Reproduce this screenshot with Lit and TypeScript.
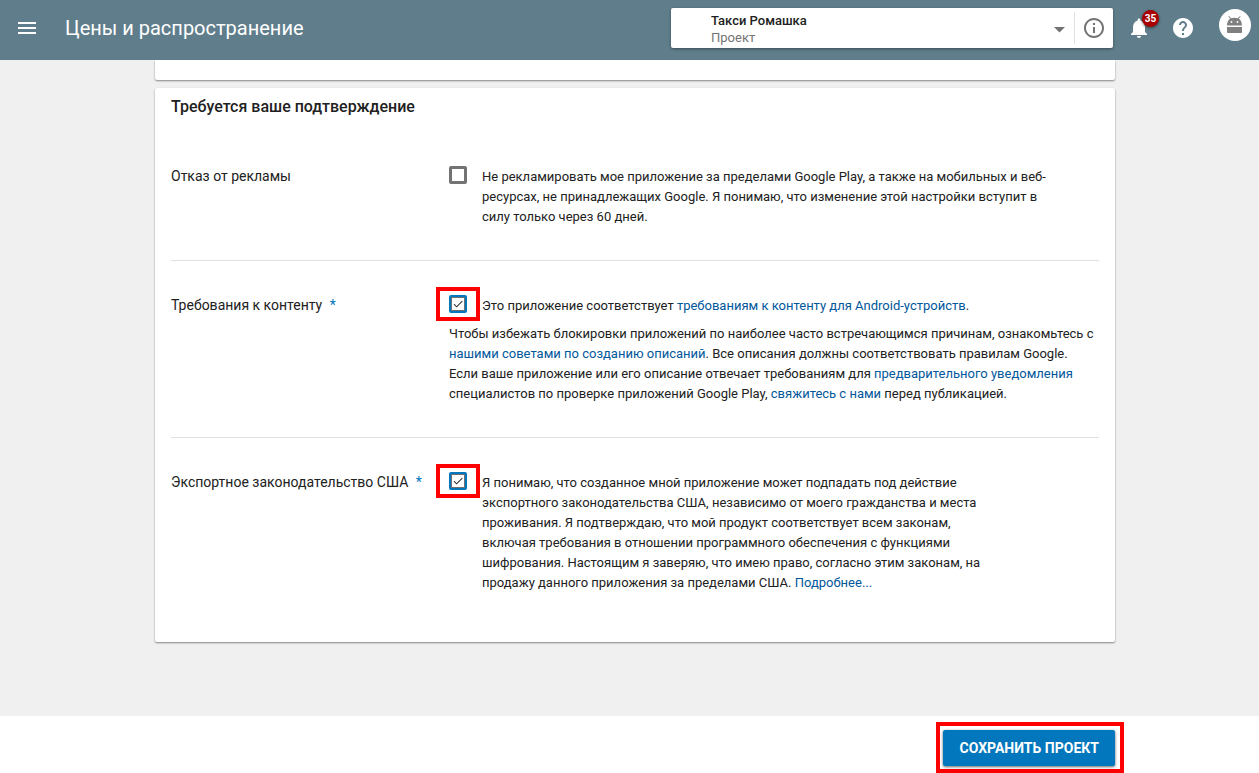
import { LitElement, html, css } from "lit";
import { customElement, property } from "lit/decorators.js";

@customElement("check-box")
class CheckBox extends LitElement {
  @property({ type: Boolean }) checked = false;
  @property({ type: Boolean }) marked = false;
  @property() label = "";

  static styles = css`
    :host { display: block; }
    .box { position: relative; display: grid; width: 18px; height: 18px; }
    .box > input, .box > svg { grid-area: 1 / 1; }
    input {
      appearance: none; box-sizing: border-box; width: 18px; height: 18px; margin: 0;
      border: 3px solid #737373; border-radius: 2px; background: #fff; cursor: pointer;
    }
    input:checked { border-width: 2px; border-color: #0277bd; box-shadow: inset 1px 1px #6f6f6f, inset -1px -1px #6f6f6f; }
    svg { pointer-events: none; visibility: hidden; z-index: 1; }
    input:checked + svg { visibility: visible; }
    .marked::after {
      content: ""; position: absolute; inset: -8px -13px;
      border: 4px solid #f00; pointer-events: none;
    }
  `;

  render() {
    return html`<span class="box ${this.marked ? "marked" : ""}">
      <input type="checkbox" aria-label=${this.label} .checked=${this.checked} />
      <svg width="18" height="18" viewBox="0 0 18 18" aria-hidden="true">
        <path d="M5 9.200 7.600 11.800 13.300 6.100" fill="none" stroke="#333" stroke-width="1.100" />
      </svg>
    </span>`;
  }
}

@customElement("app-root")
class AppRoot extends LitElement {
  static styles = css`
    :host {
      display: flex; flex-direction: column; height: 100vh; overflow: hidden;
      background: #f0f0f0; color: #212121;
      font: 13px/20px Roboto, "Noto Sans", sans-serif;
    }
    * { box-sizing: border-box; }
    button, select { font: inherit; color: inherit; border: 0; background: none; padding: 0; margin: 0; cursor: pointer; }
    svg { display: block; }
    a { color: #01579b; text-decoration: none; }

    .bar {
      flex: none; display: flex; align-items: center; height: 60px;
      padding: 0 8px 4px 15px; background: #607d8b; color: #fff;
    }
    .title { margin: 0 auto 0 26px; font-size: 20px; line-height: 28px; font-weight: 400; }
    .picker {
      display: flex; align-items: center; width: 442px; height: 40px; margin-right: 14px;
      background: #fff; color: #737373; border-radius: 2px; box-shadow: 0 1px 3px rgba(0, 0, 0, 0.4);
    }
    .project { flex: 1; display: grid; height: 40px; align-items: center; }
    .project > * { grid-area: 1 / 1; }
    .project select {
      appearance: none; width: 100%; height: 40px; padding: 4px 40px 18px;
      line-height: 18px; font-weight: 500; color: #212121;
    }
    .kind { align-self: end; padding: 0 0 0 40px; pointer-events: none; }
    .caret { justify-self: end; margin: 3px 9px 0 0; pointer-events: none; }
    .info { padding: 4px 7px; border-left: 1px solid #e0e0e0; }
    .bell { position: relative; margin-right: 20px; }
    .badge {
      position: absolute; left: 15px; top: -6px; width: 17px; height: 17px; border-radius: 50%;
      background: #a80000; color: #fff; font-size: 10px; line-height: 17px; font-weight: 700;
      text-align: center; box-shadow: 0 1px 3px rgba(0, 0, 0, 0.5);
    }
    .help { margin-right: 24px; }
    .avatar { margin-bottom: 6px; }

    main { flex: 1; min-height: 0; overflow: hidden; padding-left: 11px; }
    .card {
      max-width: 960px; margin: 0 auto 8px; padding: 9px 16px 16px; background: #fff;
      border-radius: 2px; box-shadow: 0 1px 2px rgba(0, 0, 0, 0.45);
    }
    .tail { height: 20px; padding: 0; border-radius: 0 0 2px 2px; }
    h2 { margin: 0 0 15px; font-size: 16px; line-height: 20px; font-weight: 500; }
    .row { display: grid; grid-template-columns: 278px 1fr; padding: 35px 0 33px; }
    .row + .row { border-top: 1px solid #e0e0e0; }
    .name { margin: 0; font-size: 14px; line-height: 18px; font-weight: 400; }
    .star { color: #0277bd; margin-left: 4px; }
    .option { display: flex; align-items: flex-start; gap: 15px; }
    .option check-box { margin-top: -1px; }
    p { margin: 0; }
    .wide { max-width: 576px; }
    .narrow { max-width: 504px; }
    .note { margin-top: 8px; }

    footer { flex: none; height: 57px; padding: 14px 0 7px 11px; background: #fff; }
    .actions { display: flex; justify-content: flex-end; max-width: 960px; margin: 0 auto; }
    .save {
      position: relative; height: 36px; padding: 0 16px; border-radius: 2px; background: #0277bd;
      color: #fff; font-size: 14px; font-weight: 700; box-shadow: 0 1px 3px rgba(0, 0, 0, 0.6);
    }
    .save::after {
      content: ""; position: absolute; inset: -8px -9px -7px -7px; border: 4px solid #f00; pointer-events: none;
    }
  `;

  render() {
    return html`
      <header class="bar">
        <button aria-label="Меню">
          <svg width="24" height="24" viewBox="0 0 24 24" fill="currentColor"><path d="M3 18h18v-2H3v2zm0-5h18v-2H3v2zm0-7v2h18V6H3z" /></svg>
        </button>
        <h1 class="title">Цены и распространение</h1>
        <div class="picker">
          <div class="project">
            <select id="project" aria-label="Проект"><option>Такси Ромашка</option></select>
            <label class="kind" for="project">Проект</label>
            <svg class="caret" width="11" height="6" viewBox="0 0 11 6" fill="#737373"><path d="M0 0h11L5.500 5.500z" /></svg>
          </div>
          <button class="info" aria-label="Сведения">
            <svg width="24" height="24" viewBox="0 0 24 24" fill="currentColor"><path d="M11 17h2v-6h-2v6zm1-15C6.480 2 2 6.480 2 12s4.480 10 10 10 10-4.480 10-10S17.520 2 12 2zm0 18c-4.410 0-8-3.590-8-8s3.590-8 8-8 8 3.590 8 8-3.590 8-8 8zM11 9h2V7h-2v2z" /></svg>
          </button>
        </div>
        <button class="bell" aria-label="Уведомления">
          <svg width="24" height="24" viewBox="0 0 24 24" fill="currentColor"><path d="M12 22c1.100 0 2-.9 2-2h-4c0 1.100.89 2 2 2zm6-6v-5c0-3.070-1.640-5.640-4.500-6.320V4c0-.83-.67-1.500-1.500-1.500s-1.500.67-1.500 1.500v.68C7.630 5.360 6 7.920 6 11v5l-2 2v1h16v-1l-2-2z" /></svg>
          <span class="badge">35</span>
        </button>
        <button class="help" aria-label="Справка">
          <svg width="24" height="24" viewBox="0 0 24 24" fill="currentColor"><path d="M12 2C6.480 2 2 6.480 2 12s4.480 10 10 10 10-4.480 10-10S17.520 2 12 2zm1 17h-2v-2h2v2zm2.070-7.750l-.9.920C13.450 12.900 13 13.500 13 15h-2v-.5c0-1.100.45-2.100 1.170-2.830l1.240-1.260c.37-.36.59-.86.59-1.410 0-1.100-.9-2-2-2s-2 .9-2 2H8c0-2.210 1.790-4 4-4s4 1.790 4 4c0 .88-.36 1.680-.93 2.250z" /></svg>
        </button>
        <button class="avatar" aria-label="Аккаунт">
          <svg width="32" height="32" viewBox="0 0 32 32">
            <circle cx="16" cy="16" r="16" fill="#fff" />
            <path d="M8 18h15v5a1 1 0 0 1-1 1H9a1 1 0 0 1-1-1zM8 16.500C8 13.200 9.300 11 11.200 9.800L9.300 7.500l.7-.6 2.100 2.400c2.100-.9 4.700-.9 6.800 0L21 6.900l.7.6-1.900 2.300c1.900 1.200 3.200 3.400 3.200 6.700z" fill="#808080" />
            <circle cx="12.500" cy="13" r=".9" fill="#fff" /><circle cx="18.500" cy="13" r=".9" fill="#fff" />
          </svg>
        </button>
      </header>

      <main>
        <div class="card tail"></div>
        <section class="card">
          <h2>Требуется ваше подтверждение</h2>
          <div class="row">
            <h3 class="name">Отказ от рекламы</h3>
            <div class="option">
              <check-box label="Отказ от рекламы"></check-box>
              <p class="wide">Не рекламировать мое приложение за пределами Google Play, а также на мобильных и веб-ресурсах, не принадлежащих Google. Я понимаю, что изменение этой настройки вступит в силу только через 60 дней.</p>
            </div>
          </div>
          <div class="row">
            <h3 class="name">Требования к контенту <span class="star">*</span></h3>
            <div>
              <div class="option">
                <check-box checked marked label="Требования к контенту"></check-box>
                <p>Это приложение соответствует <a href="#content">требованиям к контенту для Android-устройств</a>.</p>
              </div>
              <p class="note">Чтобы избежать блокировки приложений по наиболее часто встречающимся причинам, ознакомьтесь с <a href="#tips">нашими советами по созданию описаний</a>. Все описания должны соответствовать правилам Google. Если ваше приложение или его описание отвечает требованиям для <a href="#notice">предварительного уведомления</a> специалистов по проверке приложений Google Play, <a href="#contact">свяжитесь с нами</a> перед публикацией.</p>
            </div>
          </div>
          <div class="row">
            <h3 class="name">Экспортное законодательство США <span class="star">*</span></h3>
            <div class="option">
              <check-box checked marked label="Экспортное законодательство США"></check-box>
              <p class="narrow">Я понимаю, что созданное мной приложение может подпадать под действие экспортного законодательства США, независимо от моего гражданства и места проживания. Я подтверждаю, что мой продукт соответствует всем законам, включая требования в отношении программного обеспечения с функциями шифрования. Настоящим я заверяю, что имею право, согласно этим законам, на продажу данного приложения за пределами США. <a href="#more">Подробнее...</a></p>
            </div>
          </div>
        </section>
      </main>

      <footer>
        <div class="actions"><button class="save">СОХРАНИТЬ ПРОЕКТ</button></div>
      </footer>
    `;
  }
}
